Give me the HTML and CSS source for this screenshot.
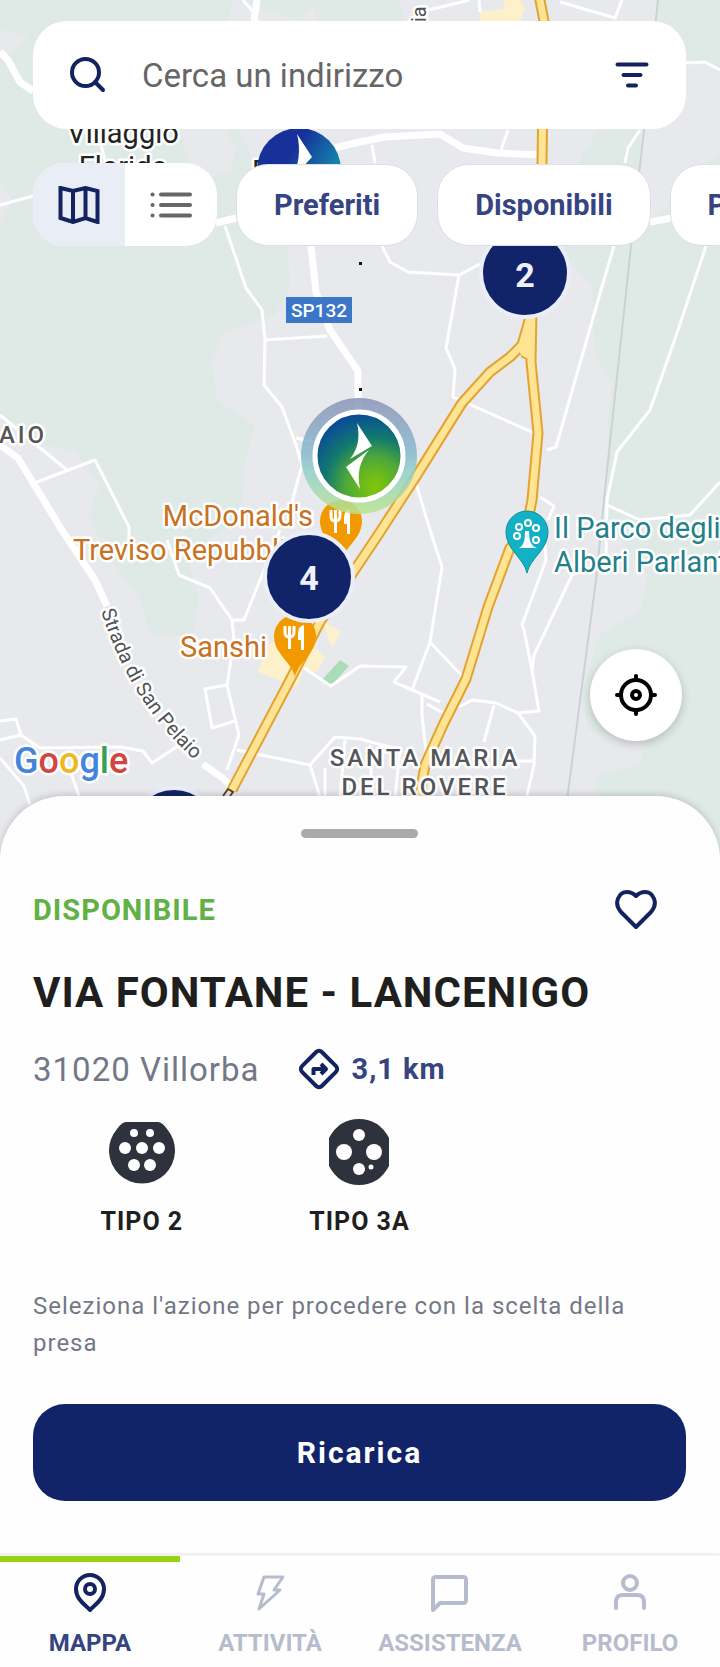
FILE: index.html
```html
<!DOCTYPE html>
<html lang="it">
<head>
  <meta charset="UTF-8" />
  <meta name="viewport" content="width=device-width, initial-scale=1.0"/>
  <title>Mappa ricarica</title>
  <link rel="stylesheet" href="styles.css">
</head>
<body>
  <main class="map">
    <svg class="map-canvas" viewBox="0 0 720 860" role="img" aria-label="Mappa">
      <defs>
        <radialGradient id="brand" cx="0.68" cy="0.85" r="0.95">
          <stop offset="0.05" stop-color="#7cc30d"/>
          <stop offset="0.35" stop-color="#4fa838"/>
          <stop offset="0.6" stop-color="#10786f"/>
          <stop offset="0.9" stop-color="#0a4a98"/>
        </radialGradient>
        <linearGradient id="brandBlue" x1="0.2" y1="0.1" x2="1" y2="0.6">
          <stop offset="0.3" stop-color="#17309a"/>
          <stop offset="1" stop-color="#139bb0"/>
        </linearGradient>
        <linearGradient id="halo" x1="0" y1="0" x2="0" y2="1">
          <stop offset="0" stop-color="#8a93b8"/>
          <stop offset="0.45" stop-color="#86b6cc"/>
          <stop offset="0.65" stop-color="#93d0cb"/>
          <stop offset="1" stop-color="#b9e58a"/>
        </linearGradient>
        <path id="pin" d="M0 41 C-3 26 -21 18 -21 0 A21 21 0 0 1 21 0 C21 18 3 26 0 41 Z"/>
        <g id="fork">
          <path d="M-10 -11 V-5 Q-10 0 -6 0 Q-1 0 -1 -5 V-11 M-5.500 -11 V12" fill="none" stroke="#fff" stroke-width="3"/>
          <path d="M9 -12 Q3 -11 3 -3 V3 H6 V13 H9 Z" fill="#fff"/>
        </g>
        <path id="strada" d="M101 611 Q118 664 144 702 Q168 738 208 772"/>
      </defs>

      <rect width="720" height="860" fill="#e8e9ed"/>

      <!-- green areas -->
      <g fill="#dfeae6">
        <path d="M0 0 H232 L222 60 L180 130 L185 150 L200 180 L230 170 L236 150 L225 130 L240 130 L288 246 L290 290 L275 315 L225 333 L212 360 L217 400 L255 425 L245 460 L242 500 L240 520 L215 535 L188 560 L199 600 L193 636 L150 635 L140 600 L110 560 L88 515 L100 485 L75 452 L45 445 L0 415 Z"/>
        <path d="M240 0 H398 L405 21 H300 Z"/>
        <path d="M656 0 H720 V70 L700 62 L686 64 L690 110 L670 130 Z"/>
        <path d="M600 130 H643 L630 246 L720 150 V860 H590 L597 775 L640 765 L645 740 L588 730 L582 690 L600 635 L640 610 L648 575 L606 520 L608 420 L612 385 L595 355 L592 285 L572 265 L540 246 L585 150 Z"/>
      </g>
      <g fill="#e8e9ed">
        <path d="M0 30 L28 37 L12 52 L0 60 Z"/>
        <path d="M0 180 L12 200 L0 224 Z"/>
        <path d="M690 64 L720 70 V150 L690 155 L650 200 L640 130 Z"/>
        <path d="M300 21 L312 6 L318 21 Z"/>
      </g>
      <g fill="#fdf1cb">
        <path d="M480 12 L505 8 L503 0 H520 L525 8 L520 21 H480 Z"/>
        <path d="M268 645 L258 672 L297 687 L304 668 L316 672 L325 658 L312 644 L300 636 L322 622 L332 648 L341 632 L322 620 Z"/>
      </g>
      <path d="M322 680 L340 660 L349 666 L331 686 Z" fill="#a9dcb9"/>

      <!-- railway -->
      <path d="M658 0 L644 130 L631 246 L606 480 L596 580 L567 800" fill="none" stroke="#ccd1d6" stroke-width="2"/>

      <!-- minor roads -->
      <g fill="none" stroke="#fff" stroke-width="3" stroke-linejoin="round">
        <path d="M0 205 L33 196"/>
        <path d="M97 130 L105 160"/>
        <path d="M225 226 L246 288 L262 310 L265 340 L264 385 L282 407 L296 445 L302 465 L292 502"/>
        <path d="M265 340 L327 336 M296 438 L330 445"/>
        <path d="M243 0 L255 14"/>
        <path d="M0 415 L67 470 M37 482 L95 460 L129 527 V560"/>
        <path d="M167 540 L179 575 L210 588 L232 620 L234 640 L227 685 L239 735 L227 770"/>
        <path d="M280 530 L244 620 H232 M227 685 L205 689 L212 728 L235 721"/>
        <path d="M237 750 L310 765 L335 737 L360 739 L400 750"/>
        <path d="M0 721 L16 719 L21 735 L0 740 M21 735 L40 748 L120 747 L143 751 L152 763 L178 746"/>
        <path d="M0 758 L24 786 L30 805 M70 770 L79 796"/>
        <path d="M304 668 L331 686 L360 666 L406 667 L394 682 L440 702"/>
        <path d="M415 480 L430 530 L442 567 L430 642 L412 690 M430 642 L463 677"/>
        <path d="M422 694 L422 715 L427 760 M427 704 L445 714"/>
        <path d="M459 707 L472 700 L496 703 L518 713 L535 736 L534 765 L526 800 M518 713 L539 711 L532 670 L524 630 L522 625 L546 560 L544 535"/>
        <path d="M532 670 L534 655 L572 575 L606 560 L607 500 L617 452 L650 410 L678 330 L706 246"/>
        <path d="M607 505 L640 520 L690 515 L720 482 M494 705 L484 742 M515 761 H535"/>
        <path d="M547 450 L556 447 L601 290 L614 246"/>
        <path d="M382 246 L390 262 L408 272 L459 275 L480 264"/>
        <path d="M459 275 L446 348 L455 369 L453 397 L532 432"/>
        <path d="M372 145 L375 163 M508 130 L501 150 M640 130 L628 148 L625 163"/>
        <path d="M420 12 L470 0 M479 0 L480 12 M560 2 L615 18 L622 0"/>
        <path d="M686 63 L705 62 L720 70 M540 497 L554 506 L548 520"/>
        <path d="M310 765 L320 797 M325 768 V797 M345 740 L340 797 M370 745 L372 797 M400 750 L395 797"/>
      </g>

      <!-- main roads -->
      <g fill="none" stroke="#fff" stroke-width="7" stroke-linejoin="round">
        <path d="M0 445 L18 458 L60 527 L95 580 L107 606"/>
        <path d="M203 764 L225 780 L232 788"/>
        <path d="M0 52 L8 60 L20 82 L33 91"/>
        <path d="M216 223 L236 218 M650 222 L672 218"/>
        <path d="M311 246 L316 292 L330 330 L358 371 V410"/>
        <path d="M257 0 L254 21"/>
        <path d="M335 148 L355 143 L385 137 L440 134 L463 148 L498 153 L540 155"/>
      </g>

      <!-- highway -->
      <g fill="none" stroke-linejoin="round">
        <g stroke="#e3a330" stroke-width="11">
          <path d="M538 -10 L544 21 L542 163 L532 310 L531 362 L538 433 L532 500 L526 530 L510 548 L488 607 L466 679 L443 725 L425 765 L419 800"/>
          <path d="M532 310 L522 345 L510 357 L490 372 L462 403 L417 475 L380 532 L320 622 L290 680 L232 790"/>
        </g>
        <path d="M527 315 L517 348 L522 358 L534 362 L535 315 Z" fill="#e3a330"/>
        <g stroke="#ffe493" stroke-width="7">
          <path d="M538 -10 L544 21 L542 163 L532 310 L531 362 L538 433 L532 500 L526 530 L510 548 L488 607 L466 679 L443 725 L425 765 L419 800"/>
          <path d="M532 310 L522 345 L510 357 L490 372 L462 403 L417 475 L380 532 L320 622 L290 680 L232 790"/>
        </g>
        <path d="M529 312 L518 348 L521 355 L530 360 L533 315 Z" fill="#ffe493"/>
      </g>

      <rect x="286" y="297" width="66" height="26" fill="#3b76c8"/>
      <text class="road-sign" x="319" y="317">SP132</text>
      <g fill="#111">
        <rect x="359" y="262" width="3" height="3"/>
        <rect x="359" y="388" width="3" height="3"/>
      </g>

      <!-- place names -->
      <g class="label town">
        <text x="123" y="143">Villaggio</text>
        <text x="123" y="177">Florida</text>
      </g>
      <g class="label area">
        <text x="23" y="443">AIO</text>
        <text x="425" y="766">SANTA MARIA</text>
        <text x="425" y="795">DEL ROVERE</text>
      </g>
      <g class="label food">
        <text x="313" y="526">McDonald's</text>
        <text x="286" y="560">Treviso Repubbli</text>
        <text x="267" y="657">Sanshi</text>
      </g>
      <g class="label park">
        <text x="554" y="538">Il Parco degli</text>
        <text x="554" y="572">Alberi Parlanti</text>
      </g>
      <text class="label street"><textPath href="#strada">Strada di San Pelaio</textPath></text>
      <text class="label street" transform="translate(426 22) rotate(-90)">ia</text>
      <g transform="translate(228 796)" fill="none" stroke="#5d4215" stroke-width="2">
        <path d="M-5 0 L0 -7 L5 -4 L2 0"/>
      </g>

      <!-- pins -->
      <use href="#pin" x="341" y="521" fill="#f29900"/>
      <use href="#fork" x="341" y="521"/>
      <use href="#pin" x="295" y="636" fill="#f29900"/>
      <use href="#fork" x="295" y="637"/>
      <use href="#pin" x="527" y="532" fill="#12b1c5" stroke="#0c8f9f"/>
      <g fill="none" stroke="#fff" stroke-width="2">
        <circle cx="517" cy="536" r="3"/>
        <circle cx="519" cy="527" r="3"/>
        <circle cx="528" cy="523" r="3"/>
        <circle cx="536" cy="528" r="3"/>
        <circle cx="536" cy="540" r="3"/>
        <path d="M522 547 Q526 544 526 532 H528 Q528 544 533 547 Z" fill="#fff"/>
      </g>

      <!-- charging stations -->
      <text class="label town" x="260" y="181">F</text>
      <circle cx="299" cy="170" r="42" fill="url(#brandBlue)"/>
      <path d="M297 134 L312 157 L291 180 Q303 158 297 134 Z" fill="#fff"/>

      <circle cx="359" cy="456" r="58" fill="url(#halo)" opacity="0.85"/>
      <circle cx="359" cy="456" r="44" fill="url(#brand)" stroke="#fff" stroke-width="5"/>
      <path d="M357 423 L372 446 L350 459 Q362 444 357 423 Z" fill="#fff"/>
      <path d="M369 450 L346 467 L360 489 Q355 466 369 450 Z" fill="#fff"/>

      <g class="cluster">
        <circle cx="525" cy="273" r="44"/>
        <text x="525" y="287">2</text>
        <circle cx="309" cy="577" r="44"/>
        <text x="309" y="590">4</text>
        <circle cx="174" cy="832" r="44"/>
      </g>

      <text class="label google" x="14" y="773"><tspan fill="#4285dc">G</tspan><tspan fill="#d3453d">o</tspan><tspan fill="#edb91f">o</tspan><tspan fill="#4285dc">g</tspan><tspan fill="#35a155">l</tspan><tspan fill="#d3453d">e</tspan></text>
    </svg>

    <div class="map-controls">
      <form class="search">
        <label for="address" aria-label="Cerca">
          <svg class="icon" width="36" height="36" viewBox="0 0 36 36" stroke-width="4"><circle cx="15.500" cy="15.500" r="13.500"/><path d="M25 25 L33 33"/></svg>
        </label>
        <input type="text" id="address" placeholder="Cerca un indirizzo" />
        <button type="button" class="icon-button" aria-label="Filtri">
          <svg class="icon" width="34" height="26" viewBox="0 0 34 26" stroke-width="4"><path d="M2.500 2.500 H31.500 M8.500 13 H25.500 M13 23.500 H21"/></svg>
        </button>
      </form>

      <div class="filters">
        <div class="view-toggle">
          <button type="button" class="active" aria-label="Vista mappa">
            <svg class="icon" width="42" height="38" viewBox="0 0 42 38" stroke-width="4"><path d="M2.500 2 L15 5 L27.500 2 L39.500 5 V36 L27.500 32 L15 36 L2.500 32 Z M15 5 V36 M27.500 2 V32" stroke-linejoin="miter"/></svg>
          </button>
          <button type="button" aria-label="Vista elenco">
            <svg class="icon grey" width="42" height="26" viewBox="0 0 42 26" stroke-width="4"><path d="M2.500 2.500 H2.600 M2.500 13 H2.600 M2.500 23.500 H2.600 M11 2.500 H40 M11 13 H40 M11 23.500 H40"/></svg>
          </button>
        </div>
        <button type="button" class="chip">Preferiti</button>
        <button type="button" class="chip">Disponibili</button>
        <button type="button" class="chip">Potenza</button>
      </div>
    </div>

    <button type="button" class="locate" aria-label="La mia posizione">
      <svg class="icon black" width="42" height="42" viewBox="0 0 42 42" stroke-width="4"><circle cx="21" cy="21" r="15"/><circle cx="21" cy="21" r="4"/><path d="M21 2 V6 M21 36 V40 M2 21 H6 M36 21 H40"/></svg>
    </button>
  </main>

  <section class="sheet">
    <div class="handle"></div>
    <div class="status-row">
      <span class="status">DISPONIBILE</span>
      <button type="button" class="icon-button" aria-label="Aggiungi ai preferiti">
        <svg class="icon" width="42" height="40" viewBox="0 0 42 40" stroke-width="4"><path d="M21 37 L6 22 C-2 13 4 2 12 2 C17 2 19 4 21 6 C23 4 25 2 30 2 C38 2 44 13 36 22 Z"/></svg>
      </button>
    </div>
    <h1>VIA FONTANE - LANCENIGO</h1>
    <div class="address">
      <span>31020 Villorba</span>
      <a class="distance" href="#">
        <svg class="icon" width="42" height="42" viewBox="0 0 42 42" stroke-width="4"><rect x="7" y="7" width="28" height="28" rx="4" transform="rotate(45 21 21)"/><path d="M15.500 27 V21 H26 M23 16 L28 21 L23 26" stroke-linecap="butt"/></svg>
        3,1 km
      </a>
    </div>
    <ul class="plugs">
      <li>
        <svg width="68" height="68" viewBox="0 0 68 68">
          <path d="M18 4 H50 Q54 4 59 11 A33 33 0 1 1 9 11 Q14 4 18 4 Z" fill="#2d323d"/>
          <g fill="#fff"><circle cx="26" cy="15" r="4"/><circle cx="42" cy="15" r="4"/><circle cx="17" cy="30" r="6"/><circle cx="34" cy="30" r="6"/><circle cx="51" cy="30" r="6"/><circle cx="26" cy="47" r="6"/><circle cx="42" cy="47" r="6"/></g>
        </svg>
        TIPO 2
      </li>
      <li>
        <svg width="68" height="68" viewBox="0 0 68 68">
          <path d="M4 20 Q14 1 34 1 Q54 1 64 20 V48 Q54 67 34 67 Q14 67 4 48 Z" fill="#2d323d"/>
          <g fill="#fff"><circle cx="34" cy="17" r="6"/><circle cx="19" cy="34" r="8"/><circle cx="49" cy="34" r="8"/><circle cx="34" cy="51" r="6"/><circle cx="46" cy="49" r="2.500"/></g>
        </svg>
        TIPO 3A
      </li>
    </ul>
    <p class="hint">Seleziona l'azione per procedere con la scelta della presa</p>
    <button type="button" class="primary">Ricarica</button>
  </section>

  <nav class="tabs">
    <a class="active" href="#">
      <svg class="icon" width="40" height="40" viewBox="0 0 40 40" stroke-width="4"><path d="M20 37 C16 32 6 27 6 16 A14 14 0 0 1 34 16 C34 27 24 32 20 37 Z"/><circle cx="20" cy="16" r="5"/></svg>
      MAPPA
    </a>
    <a href="#">
      <svg class="icon" width="40" height="40" viewBox="0 0 40 40" stroke-width="3"><path d="M14 4 H33 L24 17 H30 L9 36 L14 21 H8 Z"/></svg>
      ATTIVITÀ
    </a>
    <a href="#">
      <svg class="icon" width="40" height="40" viewBox="0 0 40 40" stroke-width="4"><path d="M3 37 V7 Q3 4 6 4 H33 Q36 4 36 7 V27 Q36 30 33 30 H10 Z"/></svg>
      ASSISTENZA
    </a>
    <a href="#">
      <svg class="icon" width="40" height="40" viewBox="0 0 40 40" stroke-width="4"><circle cx="20" cy="10" r="7"/><path d="M6 35 V29 Q6 22 13 22 H27 Q34 22 34 29 V35"/></svg>
      PROFILO
    </a>
  </nav>
</body>
</html>
```

FILE: styles.css
```css
* {
  box-sizing: border-box;
}

body {
  margin: 0;
  font-family: Roboto, sans-serif;
  background-color: #fefefe;
  color: #1f1f1f;
  overflow-x: hidden;
}

button {
  padding: 0;
  border: none;
  background: none;
  font-family: inherit;
  cursor: pointer;
}

a {
  color: inherit;
  text-decoration: none;
}

.icon {
  display: block;
  fill: none;
  stroke: #12235f;
  stroke-linecap: round;
  stroke-linejoin: round;
}

.icon.grey { stroke: #666; }
.icon.black { stroke: #000; }

/* map */
.map {
  position: relative;
  overflow: hidden;
}

.map-canvas {
  display: block;
  width: 100%;
}

.label {
  stroke: #fff;
  stroke-width: 5px;
  stroke-linejoin: round;
  paint-order: stroke;
}

.town {
  fill: #222;
  font-size: 29px;
  text-anchor: middle;
}

.area {
  fill: #55565a;
  font-size: 24px;
  font-weight: 500;
  letter-spacing: 3px;
  text-anchor: middle;
}

.food {
  fill: #c8721f;
  font-size: 29px;
  text-anchor: end;
}

.park {
  fill: #23808a;
  font-size: 29px;
}

.street {
  fill: #505155;
  font-size: 20px;
}

.google {
  font-size: 36px;
  font-weight: 500;
}

.road-sign {
  fill: #fff;
  font-size: 19px;
  font-weight: 500;
  text-anchor: middle;
}

.cluster circle {
  fill: #122469;
  stroke: #eaeef9;
  stroke-width: 4px;
}

.cluster text {
  fill: #eef1fb;
  font-size: 34px;
  font-weight: bold;
  text-anchor: middle;
}

.map-controls {
  position: absolute;
  top: 21px;
  left: 0;
  right: 0;
  padding-left: 33px;
}

.search {
  display: flex;
  align-items: center;
  height: 108px;
  margin-right: 34px;
  padding: 0 37px;
  border-radius: 34px;
  background-color: #fff;
}

.search input {
  flex: 1;
  min-width: 0;
  padding: 0 36px;
  border: none;
  outline: none;
  background: none;
  font-family: inherit;
  font-size: 33px;
}

.search input::placeholder {
  color: #666;
}

.filters {
  display: flex;
  align-items: center;
  gap: 19px;
  margin-top: 34px;
  overflow: hidden;
}

.view-toggle {
  display: flex;
  flex: none;
  height: 83px;
  border-radius: 32px;
  background-color: #fff;
  overflow: hidden;
}

.view-toggle button {
  display: flex;
  align-items: center;
  justify-content: center;
  width: 92px;
}

.view-toggle .active {
  background-color: #e9edf6;
}

.chip {
  flex: none;
  height: 82px;
  padding: 0 37px;
  border: 1px solid #dcdfea;
  border-radius: 32px;
  background-color: #fff;
  color: #364482;
  font-size: 29px;
  font-weight: bold;
}

.locate {
  position: absolute;
  right: 38px;
  bottom: 119px;
  display: flex;
  align-items: center;
  justify-content: center;
  width: 92px;
  height: 92px;
  border-radius: 50%;
  background-color: #fff;
  box-shadow: 0 3px 10px rgba(0, 0, 0, 0.2);
}

/* bottom sheet */
.sheet {
  position: relative;
  margin-top: -64px;
  padding: 33px 34px 52px 33px;
  border-radius: 64px 64px 0 0;
  background-color: #fefefe;
  box-shadow: 0 -2px 6px rgba(0, 0, 0, 0.15);
  letter-spacing: 1px;
}

.handle {
  width: 117px;
  height: 9px;
  margin: 0 auto;
  border-radius: 5px;
  background-color: #aaa;
}

.status-row {
  display: flex;
  align-items: center;
  justify-content: space-between;
  margin-top: 52px;
  padding-right: 29px;
}

.status {
  color: #61b146;
  font-size: 29px;
  font-weight: bold;
}

h1 {
  margin: 37px 0 0;
  font-size: 42px;
  line-height: 52px;
  font-weight: bold;
}

.address {
  display: flex;
  align-items: center;
  gap: 38px;
  margin-top: 29px;
  color: #737887;
  font-size: 33px;
}

.distance {
  display: flex;
  align-items: center;
  gap: 12px;
  color: #364482;
  font-size: 29px;
  font-weight: bold;
}

.plugs {
  display: grid;
  grid-template-columns: repeat(3, 1fr);
  margin: 28px 0 0;
  padding: 0;
  list-style: none;
}

.plugs li {
  display: flex;
  flex-direction: column;
  align-items: center;
  gap: 21px;
  font-size: 25px;
  line-height: 30px;
  font-weight: bold;
}

.hint {
  margin: 51px 0 0;
  color: #737887;
  font-size: 24px;
  line-height: 37px;
}

.primary {
  display: block;
  width: 100%;
  height: 97px;
  margin-top: 42px;
  border-radius: 32px;
  background-color: #122469;
  color: #fff;
  font-size: 30px;
  font-weight: bold;
  letter-spacing: 2px;
}

/* tab bar */
.tabs {
  display: grid;
  grid-template-columns: repeat(4, 1fr);
  border-top: 3px solid #f6f6f6;
}

.tabs a {
  display: flex;
  flex-direction: column;
  align-items: center;
  gap: 17px;
  padding: 11px 0 10px;
  border-top: 6px solid transparent;
  color: #b6bccd;
  font-size: 24px;
  line-height: 26px;
  font-weight: bold;
}

.tabs .icon {
  stroke: #b6bccd;
}

.tabs .active {
  border-top-color: #97d311;
  color: #364482;
}

.tabs .active .icon {
  stroke: #12235f;
}
```
